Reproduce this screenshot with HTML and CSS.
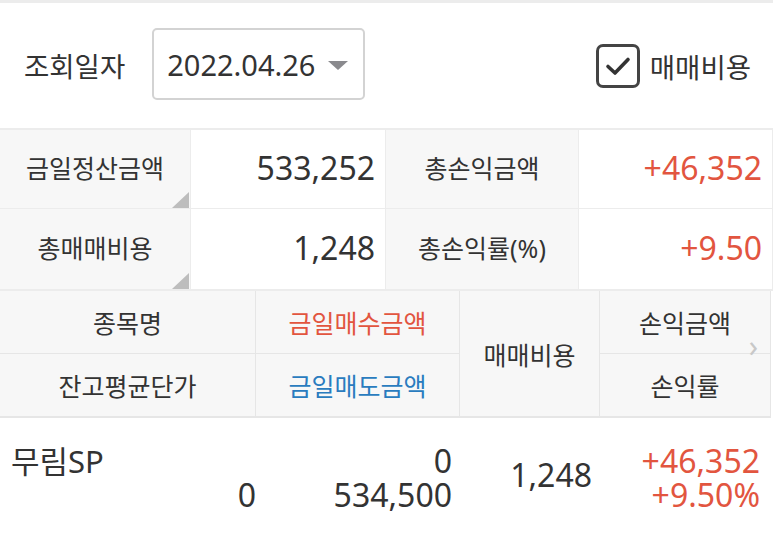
FILE: index.html
```html
<!DOCTYPE html>
<html lang="ko">
  <head>
    <meta charset="UTF-8" />
    <meta name="viewport" content="width=device-width, initial-scale=1.0" />
    <title>매매일지</title>
    <link rel="stylesheet" href="styles.css">
  </head>
  <body>
    <div class="page">
      <div class="filter">
        <span class="filter-label">조회일자</span>
        <div class="date-select">
          <span>2022.04.26</span>
          <span class="arrow"></span>
        </div>
        <label class="fee-check">
          <span class="box">
            <svg width="30" height="30" viewBox="0 0 30 30">
              <path d="M5 15.5 L12 22 L25 8.5" fill="none" stroke="#333" stroke-width="3.6" stroke-linecap="round" stroke-linejoin="round" />
            </svg>
          </span>
          매매비용
        </label>
      </div>

      <div class="summary">
        <div class="cell label corner">금일정산금액</div>
        <div class="cell value">533,252</div>
        <div class="cell label">총손익금액</div>
        <div class="cell value up">+46,352</div>
        <div class="cell label corner">총매매비용</div>
        <div class="cell value">1,248</div>
        <div class="cell label">총손익률(%)</div>
        <div class="cell value up">+9.50</div>
      </div>

      <div class="head">
        <div class="hcell">종목명</div>
        <div class="hcell up">금일매수금액</div>
        <div class="hcell tall">매매비용</div>
        <div class="hcell">손익금액</div>
        <div class="hcell">잔고평균단가</div>
        <div class="hcell down">금일매도금액</div>
        <div class="hcell">손익률</div>
        <span class="more">&#8250;</span>
      </div>

      <div class="item">
        <div class="col name-col">
          <span class="name">무림SP</span>
          <span class="num">0</span>
        </div>
        <div class="col">
          <span class="num">0</span>
          <span class="num">534,500</span>
        </div>
        <div class="col mid">
          <span class="num">1,248</span>
        </div>
        <div class="col">
          <span class="num up">+46,352</span>
          <span class="num up">+9.50%</span>
        </div>
      </div>
    </div>
  </body>
</html>
```

FILE: styles.css
```css
* {
  box-sizing: border-box;
}

body {
  margin: 0;
  background: #fff;
  font-family: "Noto Sans", "Noto Sans CJK KR", sans-serif;
  color: #333;
}

.page {
  width: 773px;
  border-top: 3px solid #ececec;
}

.up {
  color: #e2553f;
}

.down {
  color: #2a7cbf;
}

/* 조회 조건 */
.filter {
  height: 125px;
  display: flex;
  align-items: center;
  padding: 0 22px 0 24px;
}

.filter-label {
  font-size: 27.5px;
  margin-right: 27px;
  margin-top: -2px;
}

.date-select {
  width: 213px;
  height: 72px;
  border: 2px solid #d3d3d3;
  border-radius: 5px;
  display: flex;
  align-items: center;
  justify-content: space-between;
  padding: 0 15px 0 13px;
  font-size: 29px;
  margin-top: -3px;
}

.arrow {
  width: 0;
  height: 0;
  border-left: 10px solid transparent;
  border-right: 10px solid transparent;
  border-top: 9px solid #8a8a8e;
  margin-top: 2px;
}

.fee-check {
  margin-left: auto;
  display: flex;
  align-items: center;
  font-size: 27.5px;
}

.box {
  width: 44px;
  height: 44px;
  border: 3px solid #444;
  border-radius: 7px;
  display: flex;
  align-items: center;
  justify-content: center;
  margin-right: 10px;
}

/* 합계 */
.summary {
  display: grid;
  grid-template-columns: 191px 195px 193px 194px;
  grid-template-rows: 79px 80px;
  border-top: 2px solid #ececec;
  border-bottom: 2px solid #ececec;
}

.cell {
  display: flex;
  align-items: center;
  border-right: 1px solid #ececec;
  border-bottom: 1px solid #ececec;
}

.cell:nth-child(n+5) {
  border-bottom: none;
}

.label {
  background: #f7f7f7;
  justify-content: center;
  font-size: 25px;
  position: relative;
  padding-bottom: 4px;
}

.corner::after {
  content: "";
  position: absolute;
  right: 1px;
  bottom: 0;
  border-left: 17px solid transparent;
  border-bottom: 16px solid #bdbdbd;
}

.value {
  justify-content: flex-end;
  padding: 0 10px 4px 0;
  font-size: 32px;
}

/* 목록 헤더 */
.head {
  display: grid;
  grid-template-columns: 256px 204px 140px 170px;
  grid-template-rows: 63px 62px;
  width: 771px;
  background: #f7f7f7;
  border-bottom: 2px solid #e6e6e6;
  border-right: 1px solid #e6e6e6;
  position: relative;
}

.hcell {
  display: flex;
  align-items: center;
  justify-content: center;
  font-size: 25px;
  border-right: 1px solid #e6e6e6;
  border-bottom: 1px solid #e6e6e6;
}

.hcell:nth-child(4),
.hcell:nth-child(7) {
  border-right: none;
}

.hcell:nth-child(n+5) {
  border-bottom: none;
}

.tall {
  grid-row: span 2;
  grid-column: 3;
  border-bottom: none;
}

.more {
  position: absolute;
  right: 12px;
  top: 40px;
  font-size: 30px;
  color: #c8c8c8;
  line-height: 1;
}

/* 종목 */
.item {
  display: grid;
  grid-template-columns: 256px 204px 140px 173px;
  padding-top: 26px;
}

.col {
  display: flex;
  flex-direction: column;
  align-items: flex-end;
  padding-right: 8px;
  font-size: 32px;
  line-height: 34px;
}

.name-col {
  padding-right: 0;
}

.name {
  align-self: flex-start;
  padding-left: 11px;
  font-size: 31px;
}

.mid {
  justify-content: center;
  padding-bottom: 6px;
}

.col:last-child {
  padding-right: 13px;
}
```
